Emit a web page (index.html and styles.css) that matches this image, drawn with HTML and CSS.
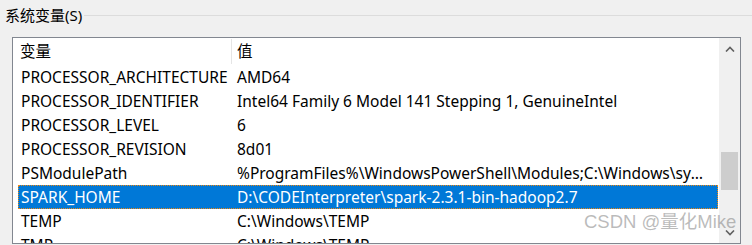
FILE: index.html
```html
<!DOCTYPE html>
<html lang="zh-CN">
<head>
    <meta charset="UTF-8">
    <title>系统变量</title>
    <link rel="stylesheet" href="styles.css">
</head>
<body>
    <div class="group-title">
        <span class="group-label">系统变量(S)</span>
        <span class="group-line"></span>
    </div>
    <div class="list-box">
        <div class="list-content">
            <div class="list-header">
                <div class="head-name">变量</div>
                <div class="head-divider"></div>
                <div class="head-value">值</div>
            </div>
            <div class="row"><div class="cell-name">PROCESSOR_ARCHITECTURE</div><div class="cell-value">AMD64</div></div>
            <div class="row"><div class="cell-name">PROCESSOR_IDENTIFIER</div><div class="cell-value">Intel64 Family 6 Model 141 Stepping 1, GenuineIntel</div></div>
            <div class="row"><div class="cell-name">PROCESSOR_LEVEL</div><div class="cell-value">6</div></div>
            <div class="row"><div class="cell-name">PROCESSOR_REVISION</div><div class="cell-value">8d01</div></div>
            <div class="row"><div class="cell-name">PSModulePath</div><div class="cell-value">%ProgramFiles%\WindowsPowerShell\Modules;C:\Windows\system32\WindowsPowerShell\v1.0\Modules</div></div>
            <div class="row selected"><div class="cell-name">SPARK_HOME</div><div class="cell-value">D:\CODEInterpreter\spark-2.3.1-bin-hadoop2.7</div></div>
            <div class="row"><div class="cell-name">TEMP</div><div class="cell-value">C:\Windows\TEMP</div></div>
            <div class="row"><div class="cell-name">TMP</div><div class="cell-value">C:\Windows\TEMP</div></div>
        </div>
        <div class="scrollbar">
            <div class="scroll-btn">
                <svg width="10" height="6" viewBox="0 0 10 6"><path d="M1 5.5L5 1.5L9 5.5" fill="none" stroke="#606060" stroke-width="1.6"/></svg>
            </div>
            <div class="scroll-track">
                <div class="scroll-thumb"></div>
            </div>
            <div class="scroll-btn">
                <svg width="10" height="6" viewBox="0 0 10 6"><path d="M1 0.5L5 4.5L9 0.5" fill="none" stroke="#606060" stroke-width="1.6"/></svg>
            </div>
        </div>
    </div>
    <div class="watermark">CSDN @量化Mike</div>
</body>
</html>
```
FILE: styles.css
```css
body {
    margin: 0;
    background-color: #f0f0f0;
    font-family: 'Noto Sans', 'Noto Sans CJK SC', sans-serif;
    font-size: 15.5px;
    color: #000;
    overflow: hidden;
}
.group-title {
    display: flex;
    align-items: center;
    height: 30px;
    padding-left: 5px;
}
.group-label {
    font-size: 15px;
    line-height: 30px;
    margin-right: 2px;
}
.group-line {
    flex: 1;
    border-top: 1px solid #dcdcdc;
}
.list-box {
    margin: 7px 0 0 12px;
    width: 729px;
    height: 207px;
    box-sizing: border-box;
    border: 1px solid #828790;
    background-color: #fff;
    display: flex;
    overflow: hidden;
}
.list-content {
    flex: 1;
    overflow: hidden;
}
.list-header {
    display: flex;
    height: 27px;
    align-items: flex-start;
}
.head-name {
    width: 211px;
    padding-left: 7px;
    line-height: 27px;
}
.head-divider {
    width: 1px;
    height: 25px;
    margin-top: 1px;
    background-color: #e5e5e5;
}
.head-value {
    padding-left: 5px;
    line-height: 27px;
}
.row {
    display: flex;
    height: 24px;
    line-height: 24px;
    margin: 0 1px 0 5px;
    box-sizing: border-box;
    white-space: nowrap;
}
.cell-name {
    width: 210px;
    padding-left: 3px;
    flex-shrink: 0;
}
.cell-value {
    flex: 1;
    padding-left: 6px;
    padding-right: 10px;
    overflow: hidden;
    text-overflow: ellipsis;
}
.row.selected {
    background-color: #0078d7;
    color: #fff;
    border: 1px dotted #f0870f;
    line-height: 22px;
}
.row.selected .cell-name {
    padding-left: 2px;
}
.scrollbar {
    width: 21px;
    background-color: #f0f0f0;
    display: flex;
    flex-direction: column;
}
.scroll-btn {
    height: 21px;
    display: flex;
    align-items: center;
    justify-content: center;
}
.scroll-track {
    flex: 1;
    padding-top: 93px;
}
.scroll-thumb {
    width: 17px;
    height: 38px;
    margin-left: 2px;
    background-color: #cdcdcd;
}
.watermark {
    position: absolute;
    left: 584px;
    top: 209px;
    font-family: 'Liberation Sans', 'Noto Sans CJK SC', sans-serif;
    font-size: 18.5px;
    line-height: 26px;
    color: rgba(120, 120, 120, 0.5);
}
```
